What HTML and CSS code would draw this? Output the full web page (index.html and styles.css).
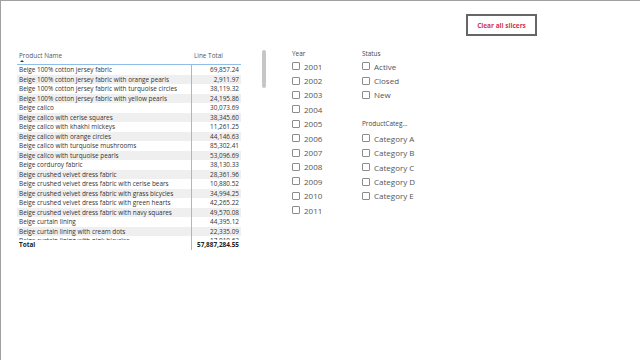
FILE: index.html
```html
<!DOCTYPE html>
<html lang="en">
<head>
    <meta charset="UTF-8">
    <meta name="viewport" content="width=device-width, initial-scale=1.0">
    <title>Sales report</title>
    <link rel="stylesheet" href="styles.css">
</head>
<body>
    <div class="canvas">
        <!-- Tabela de produtos -->
        <div class="table-visual">
            <div class="table-head">
                <div class="col-name">Product Name<span class="sort-arrow"></span></div>
                <div class="col-total">Line Total</div>
            </div>
            <div class="table-body">
                <div class="row"><div class="col-name">Beige 100% cotton jersey fabric</div><div class="col-total">69,857.24</div></div>
                <div class="row"><div class="col-name">Beige 100% cotton jersey fabric with orange pearls</div><div class="col-total">2,911.97</div></div>
                <div class="row"><div class="col-name">Beige 100% cotton jersey fabric with turquoise circles</div><div class="col-total">38,119.32</div></div>
                <div class="row"><div class="col-name">Beige 100% cotton jersey fabric with yellow pearls</div><div class="col-total">24,195.86</div></div>
                <div class="row"><div class="col-name">Beige calico</div><div class="col-total">30,073.69</div></div>
                <div class="row"><div class="col-name">Beige calico with cerise squares</div><div class="col-total">38,345.60</div></div>
                <div class="row"><div class="col-name">Beige calico with khakhi mickeys</div><div class="col-total">11,261.25</div></div>
                <div class="row"><div class="col-name">Beige calico with orange circles</div><div class="col-total">44,146.63</div></div>
                <div class="row"><div class="col-name">Beige calico with turquoise mushrooms</div><div class="col-total">85,302.41</div></div>
                <div class="row"><div class="col-name">Beige calico with turquoise pearls</div><div class="col-total">53,096.69</div></div>
                <div class="row"><div class="col-name">Beige corduroy fabric</div><div class="col-total">38,130.33</div></div>
                <div class="row"><div class="col-name">Beige crushed velvet dress fabric</div><div class="col-total">28,361.96</div></div>
                <div class="row"><div class="col-name">Beige crushed velvet dress fabric with cerise bears</div><div class="col-total">10,880.52</div></div>
                <div class="row"><div class="col-name">Beige crushed velvet dress fabric with grass bicycles</div><div class="col-total">34,994.25</div></div>
                <div class="row"><div class="col-name">Beige crushed velvet dress fabric with green hearts</div><div class="col-total">42,265.22</div></div>
                <div class="row"><div class="col-name">Beige crushed velvet dress fabric with navy squares</div><div class="col-total">49,570.08</div></div>
                <div class="row"><div class="col-name">Beige curtain lining</div><div class="col-total">44,395.12</div></div>
                <div class="row"><div class="col-name">Beige curtain lining with cream dots</div><div class="col-total">22,335.09</div></div>
                <div class="row"><div class="col-name">Beige curtain lining with pink bicycles</div><div class="col-total">17,010.63</div></div>
            </div>
            <div class="table-foot">
                <div class="col-name">Total</div>
                <div class="col-total">57,887,284.55</div>
            </div>
        </div>
        <div class="scrollbar"></div>

        <!-- Segmentações -->
        <div class="slicer slicer-year">
            <div class="slicer-title">Year</div>
            <label class="item"><span class="box"></span>2001</label>
            <label class="item"><span class="box"></span>2002</label>
            <label class="item"><span class="box"></span>2003</label>
            <label class="item"><span class="box"></span>2004</label>
            <label class="item"><span class="box"></span>2005</label>
            <label class="item"><span class="box"></span>2006</label>
            <label class="item"><span class="box"></span>2007</label>
            <label class="item"><span class="box"></span>2008</label>
            <label class="item"><span class="box"></span>2009</label>
            <label class="item"><span class="box"></span>2010</label>
            <label class="item"><span class="box"></span>2011</label>
        </div>

        <div class="slicer-stack">
            <div class="slicer">
                <div class="slicer-title">Status</div>
                <label class="item"><span class="box"></span>Active</label>
                <label class="item"><span class="box"></span>Closed</label>
                <label class="item"><span class="box"></span>New</label>
            </div>
            <div class="slicer slicer-category">
                <div class="slicer-title">ProductCategory</div>
                <label class="item"><span class="box"></span>Category A</label>
                <label class="item"><span class="box"></span>Category B</label>
                <label class="item"><span class="box"></span>Category C</label>
                <label class="item"><span class="box"></span>Category D</label>
                <label class="item"><span class="box"></span>Category E</label>
            </div>
        </div>

        <button class="btn-clear">Clear all slicers</button>
    </div>
</body>
</html>
```

FILE: styles.css
```css
* {
    margin: 0;
    padding: 0;
    box-sizing: border-box;
    font-family: 'Open Sans', 'Noto Sans', Arial, sans-serif;
}

body {
    background-color: white;
    color: #333;
}

.canvas {
    width: 640px;
    height: 360px;
    border-top: 1px solid #a0a0a0;
    border-left: 1px solid #a0a0a0;
    display: flex;
    align-items: flex-start;
    overflow: hidden;
}

/* tabela */
.table-visual {
    width: 224px;
    margin-left: 16px;
    margin-top: 49px;
    font-size: 6.4px;
}

.table-head {
    display: flex;
    height: 15px;
    border-bottom: 1px solid #8fbfe8;
    color: #555;
}

.table-head .col-name {
    padding-top: 1px;
    line-height: 9px;
}

.table-head .col-total {
    padding-top: 1px;
    padding-left: 3px;
    line-height: 9px;
    text-align: left;
}

.sort-arrow {
    display: block;
    width: 0;
    height: 0;
    margin-left: 1px;
    border-left: 2px solid transparent;
    border-right: 2px solid transparent;
    border-bottom: 2px solid #333;
}

.col-name {
    width: 174px;
    padding-left: 2px;
    white-space: nowrap;
    overflow: hidden;
}

.col-total {
    flex: 1;
    padding-right: 2px;
    text-align: right;
    white-space: nowrap;
}

.table-body {
    height: 175px;
    overflow: hidden;
}

.row {
    display: flex;
    height: 9.5px;
    line-height: 9.5px;
    color: #333;
}

.row:nth-child(even) {
    background: #efefef;
}

.row .col-total,
.table-foot .col-total {
    border-left: 1px solid #8fbfe8;
}

.table-foot {
    display: flex;
    height: 10px;
    line-height: 10px;
    font-weight: bold;
    color: #222;
}

.scrollbar {
    width: 4px;
    height: 38px;
    margin-left: 21px;
    margin-top: 49px;
    border-radius: 2px;
    background: #c6c6c6;
}

/* segmentações */
.slicer {
    display: flex;
    flex-direction: column;
}

.slicer-year {
    width: 70px;
    margin-left: 26px;
    margin-top: 48px;
}

.slicer-stack {
    margin-top: 48px;
}

.slicer-title {
    height: 10px;
    line-height: 10px;
    font-size: 6.4px;
    color: #444;
}

.slicer-category {
    margin-top: 17px;
}

.slicer-category .slicer-title {
    width: 49px;
    margin-bottom: 2px;
    overflow: hidden;
    white-space: nowrap;
    text-overflow: ellipsis;
}

.item {
    display: flex;
    align-items: center;
    gap: 4px;
    height: 14.4px;
    font-size: 8px;
    color: #555;
}

.box {
    width: 8px;
    height: 8px;
    border: 1px solid #8c8c8c;
    border-radius: 1px;
}

.btn-clear {
    width: 71px;
    height: 22px;
    margin-left: auto;
    margin-right: 103px;
    margin-top: 13px;
    background: white;
    border: 2px solid #666;
    color: #d6334b;
    font-size: 6.5px;
    font-weight: bold;
}
```
